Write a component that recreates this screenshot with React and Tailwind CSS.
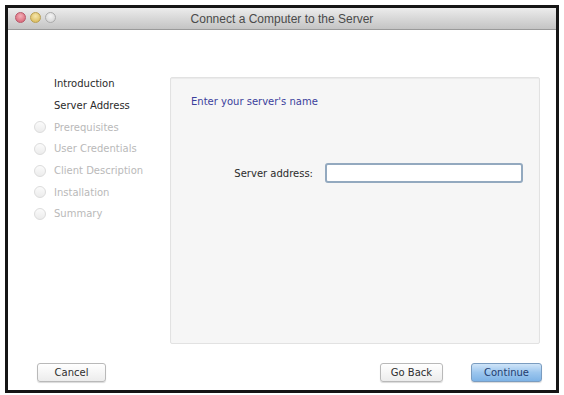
import React from 'react';

const STEPS = [
  { label: 'Introduction', done: true },
  { label: 'Server Address', done: true },
  { label: 'Prerequisites', done: false },
  { label: 'User Credentials', done: false },
  { label: 'Client Description', done: false },
  { label: 'Installation', done: false },
  { label: 'Summary', done: false },
];

function StepRow({ label, done }) {
  return (
    <div className="flex items-center h-[21.7px]">
      <div className="w-[20px] flex justify-start">
        {!done && (
          <span className="block w-[12px] h-[12px] rounded-full border border-[#dcdcdc] bg-gradient-to-b from-[#fbfbfb] to-[#ececec]" />
        )}
      </div>
      <span className={done ? 'text-[#2a2a2a]' : 'text-[#b9b9b9]'}>{label}</span>
    </div>
  );
}

function Button({ children, primary, className = '' }) {
  const look = primary
    ? 'bg-gradient-to-b from-[#cfe4f8] via-[#9cc6ee] to-[#7eb3e6] border-[#7a9cc0] text-[#1f3c6e]'
    : 'bg-gradient-to-b from-[#ffffff] to-[#ececec] border-[#b9b9b9] text-[#2e2e2e]';
  return (
    <button className={`h-[19px] rounded-[3px] border shadow-[0_1px_1px_rgba(0,0,0,0.15)] text-[10px] leading-none ${look} ${className}`}>
      {children}
    </button>
  );
}

export default function App() {
  return (
    <div className="w-[564px] h-[395px] bg-white pl-[5px] pt-[5px] font-['DejaVu_Sans','Liberation_Sans',sans-serif]">
      <div className="w-[554px] h-[388px] border-[3px] border-[#151515] bg-white flex flex-col">
        {/* title bar */}
        <div className="relative h-[22px] shrink-0 bg-gradient-to-b from-[#ececec] to-[#c4c4c4] border-b border-[#9a9a9a] flex items-center justify-center">
          <div className="absolute left-[7px] top-[4px] flex gap-[4px]">
            <span className="block w-[11px] h-[11px] rounded-full bg-[radial-gradient(circle_at_50%_35%,#f3b0b8,#d45a6c)] border border-[#b8586a]" />
            <span className="block w-[11px] h-[11px] rounded-full bg-[radial-gradient(circle_at_50%_35%,#f5e6ad,#d6b44e)] border border-[#b99f52]" />
            <span className="block w-[11px] h-[11px] rounded-full bg-[radial-gradient(circle_at_50%_35%,#f4f4f4,#cfcfcf)] border border-[#ababab]" />
          </div>
          <span className="text-[12px] text-[#4a4a4a] font-['Liberation_Sans',sans-serif]">Connect a Computer to the Server</span>
        </div>

        {/* body */}
        <div className="flex-1 flex flex-col">
          <div className="flex pt-[47px]">
            <div className="w-[162px] pl-[26px] text-[10px] -mt-[4px]">
              {STEPS.map((s) => (
                <StepRow key={s.label} {...s} />
              ))}
            </div>
            <div className="w-[370px] h-[267px] bg-[#f6f6f6] border border-[#e2e2e2] rounded-[2px] shadow-[inset_0_1px_1px_rgba(0,0,0,0.05)] pl-[20px] pr-[15px] pt-[16px]">
              <p className="text-[10px] text-[#3b3f9c]">Enter your server's name</p>
              <div className="flex items-center mt-[54px]">
                <label className="w-[134px] shrink-0 text-right pr-[12px] text-[10px] text-[#2b2b2b]">Server address:</label>
                <input className="w-[198px] shrink-0 h-[20px] border-2 border-[#93a9bf] rounded-[3px] bg-white outline-none" />
              </div>
            </div>
          </div>

          <div className="flex items-center mt-[19px] pl-[29px] pr-[14px]">
            <Button className="w-[69px]">Cancel</Button>
            <div className="flex-1" />
            <Button className="w-[63px]">Go Back</Button>
            <Button primary className="w-[71px] ml-[28px]">Continue</Button>
          </div>
        </div>
      </div>
    </div>
  );
}
